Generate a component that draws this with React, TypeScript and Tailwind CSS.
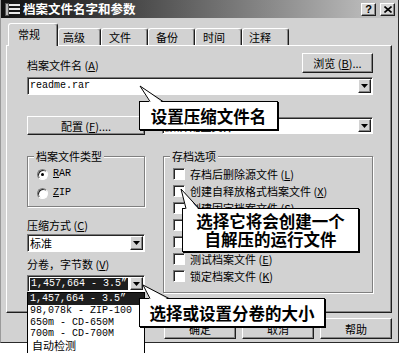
import React from 'react'

const raised =
  'border border-t-white border-l-white border-r-[#1e1e1e] border-b-[#1e1e1e] shadow-[inset_-1px_-1px_0_#868686]'
const sunken =
  'border border-t-[#7a7a7a] border-l-[#7a7a7a] border-r-white border-b-white shadow-[inset_1px_1px_0_#262626]'
const mono = "font-['Liberation_Mono','Noto_Sans_CJK_SC',monospace]"

function Arrow() {
  return (
    <svg width="7" height="4" viewBox="0 0 7 4">
      <path d="M0 0H7L3.5 4Z" fill="#000" />
    </svg>
  )
}

function Button({ className = '', children }: { className?: string; children: React.ReactNode }) {
  return (
    <div className={`flex items-center justify-center bg-[#d2d2d2] text-[11px] leading-[12px] ${raised} ${className}`}>
      {children}
    </div>
  )
}

function Combo({ className = '', children }: { className?: string; children?: React.ReactNode }) {
  return (
    <div className={`flex bg-white ${sunken} ${className}`}>
      <div className="flex-1 min-w-0 flex items-center pl-[2px] overflow-hidden whitespace-nowrap">{children}</div>
      <div className={`w-[13px] m-[1px] flex items-center justify-center bg-[#d2d2d2] ${raised}`}>
        <Arrow />
      </div>
    </div>
  )
}

function Radio({ on, label }: { on?: boolean; label: string }) {
  return (
    <div className="flex items-center gap-[5px] h-[12px]">
      <span className={`w-[11px] h-[11px] rounded-full bg-white flex items-center justify-center ${sunken}`}>
        {on && <span className="w-[3px] h-[3px] rounded-full bg-black" />}
      </span>
      <span className={`${mono} text-[10px] leading-[12px]`}>
        <span className="underline">{label[0]}</span>
        {label.slice(1)}
      </span>
    </div>
  )
}

function Check({ label, k }: { label: string; k: string }) {
  return (
    <div className="flex items-center gap-[5px] h-[12px]">
      <span className={`w-[12px] h-[12px] shrink-0 bg-white ${sunken}`} />
      <span className="text-[11px] leading-[12px] whitespace-nowrap">
        {label} (<span className="underline">{k}</span>)
      </span>
    </div>
  )
}

function TitleBar() {
  return (
    <div className="flex items-center h-[18px] bg-linear-to-r from-[#111111] via-[#686868] to-[#cacaca]">
      <svg width="16" height="13" viewBox="0 0 16 13" className="ml-[4px]">
        <rect x="0" y="0" width="4" height="13" fill="#555" />
        <rect x="4" y="1" width="11" height="2" fill="#e8e8e8" />
        <rect x="4" y="5" width="11" height="2" fill="#e8e8e8" />
        <rect x="4" y="9" width="11" height="2" fill="#e8e8e8" />
        <rect x="1" y="1" width="2" height="11" fill="#bbb" />
      </svg>
      <span className="ml-[2px] text-white font-bold text-[12.5px] leading-[14px]">档案文件名字和参数</span>
      <div className="ml-auto mr-[3px] flex gap-[4px]">
        <div className={`w-[15px] h-[13px] bg-[#d8d8d8] flex items-center justify-center text-[11px] font-bold leading-none font-['Liberation_Sans',sans-serif] ${raised}`}>
          ?
        </div>
        <div className={`w-[15px] h-[13px] bg-[#d8d8d8] flex items-center justify-center ${raised}`}>
          <svg width="8" height="7" viewBox="0 0 8 7">
            <path d="M0.5 0.5L7.5 6.5M7.5 0.5L0.5 6.5" stroke="#000" strokeWidth="1.6" />
          </svg>
        </div>
      </div>
    </div>
  )
}

function Tabs() {
  const tab =
    'flex items-center text-[11px] leading-[12px] border-t border-l border-r border-t-white border-l-white border-r-[#1e1e1e] rounded-t-[3px] shadow-[inset_-1px_0_0_#868686]'
  return (
    <div className="flex items-end h-[22px] ml-[7px] mt-[5px]">
      <div className={`${tab} relative z-10 -mb-px h-[23px] w-[50px] pl-[9px] pb-[2px] bg-[#d2d2d2]`}>常规</div>
      <div className={`${tab} h-[17px] w-[43px] pl-[4px]`}>高级</div>
      <div className={`${tab} h-[17px] w-[47px] pl-[7px]`}>文件</div>
      <div className={`${tab} h-[17px] w-[47px] pl-[7px]`}>备份</div>
      <div className={`${tab} h-[17px] w-[47px] pl-[7px]`}>时间</div>
      <div className={`${tab} h-[17px] w-[47px] pl-[6px]`}>注释</div>
    </div>
  )
}

function Group({ title, className = '', children }: { title: string; className?: string; children: React.ReactNode }) {
  return (
    <fieldset className={`border border-[#808080] shadow-[inset_1px_1px_0_#ffffff,1px_1px_0_#ffffff] ${className}`}>
      <legend className="ml-[6px] px-[2px] bg-[#d2d2d2] text-[11px] leading-[11px]">{title}</legend>
      {children}
    </fieldset>
  )
}

function Panel() {
  return (
    <div className="ml-[5px] w-[386px] h-[268px] flex flex-col pl-[20px] pr-[18px] pt-[7px] border border-t-white border-l-white border-r-[#1e1e1e] border-b-[#1e1e1e] shadow-[inset_-1px_-1px_0_#868686]">
      <div className="flex items-end justify-between h-[20px]">
        <span className="text-[11px] leading-[12px] pb-[2px]">
          档案文件名 (<span className="underline">A</span>)
        </span>
        <Button className="w-[71px] h-[20px]">
          浏览 (<span className="underline">B</span>)...
        </Button>
      </div>
      <Combo className="mt-[4px] h-[18px]">
        <span className={`${mono} text-[10px] leading-[12px]`}>readme.rar</span>
      </Combo>

      <div className="flex items-start mt-[21px]">
        <Button className="w-[118px] h-[19px]">
          配置 (<span className="underline">F</span>)....
        </Button>
        <Combo className="ml-[17px] mt-[1px] flex-1 h-[17px]">
          <span className="text-[11px] leading-[12px] font-bold text-[#222]">默认 配置文件</span>
        </Combo>
      </div>

      <div className="flex items-start mt-[16px]">
        <div className="w-[118px] flex flex-col">
          <Group title="档案文件类型" className="h-[56px]">
            <div className="flex flex-col gap-[7px] pl-[9px] pt-[6px]">
              <Radio on label="RAR" />
              <Radio label="ZIP" />
            </div>
          </Group>
          <span className="mt-[12px] text-[11px] leading-[12px]">
            压缩方式 (<span className="underline">C</span>)
          </span>
          <Combo className="mt-[3px] h-[18px]">
            <span className="text-[11px] leading-[12px]">标准</span>
          </Combo>
          <span className="mt-[6px] text-[11px] leading-[12px]">
            分卷，字节数 (<span className="underline">V</span>)
          </span>
          <Combo className="mt-[5px] h-[17px]">
            <span className={`${mono} text-[10px] leading-[12px] bg-[#1e1e1e] text-white px-[1px]`}>
              1,457,664 - 3.5”
            </span>
          </Combo>
        </div>

        <Group title="存档选项" className="ml-[18px] w-[210px] h-[142px]">
          <div className="flex flex-col gap-[5px] pl-[9px] pt-[6px]">
            <Check label="存档后删除源文件" k="L" />
            <Check label="创建自释放格式档案文件" k="X" />
            <Check label="创建固定档案文件" k="S" />
            <Check label="添加真实性校验信息" k="U" />
            <Check label="添加恢复记录" k="R" />
            <Check label="测试档案文件" k="E" />
            <Check label="锁定档案文件" k="K" />
          </div>
        </Group>
      </div>
    </div>
  )
}

function DropList() {
  const items = ['98,078k - ZIP-100', '650m - CD-650M', '700m - CD-700M']
  return (
    <div className="absolute left-[27px] top-[292px] w-[118px] h-[62px] bg-white border border-black flex flex-col">
      <div className={`h-[12px] pl-[2px] bg-[#1e1e1e] text-white ${mono} text-[10px] leading-[12px] whitespace-nowrap`}>
        1,457,664 - 3.5”
      </div>
      {items.map((t) => (
        <div key={t} className={`h-[11.7px] pl-[2px] ${mono} text-[10px] leading-[11.7px] whitespace-nowrap`}>
          {t}
        </div>
      ))}
      <div className="h-[11px] pl-[4px] text-[11px] leading-[11px]">自动检测</div>
    </div>
  )
}

const bubble =
  'absolute bg-white border border-black shadow-[1px_1px_0_#000] flex flex-col items-center justify-center font-bold text-[16.5px] leading-[18px] whitespace-nowrap'

function Callouts() {
  return (
    <>
      <div className={`${bubble} left-[139px] top-[101px] w-[139px] h-[29px]`}>设置压缩文件名</div>
      <div className={`${bubble} left-[182px] top-[208px] w-[177px] h-[44px]`}>
        <span>选择它将会创建一个</span>
        <span>自解压的运行文件</span>
      </div>
      <div className={`${bubble} left-[139px] top-[298px] w-[186px] h-[29px]`}>选择或设置分卷的大小</div>
      <svg className="absolute left-0 top-0" width="400" height="353" viewBox="0 0 400 353">
        <polygon points="140,86 150,103 163,103" fill="#fff" />
        <polyline points="150,101.5 140,86 163,101.5" fill="none" stroke="#000" strokeWidth="1" />
        <polygon points="181,189 186,210 199,210" fill="#fff" />
        <polyline points="186,208.5 181,189 199,208.5" fill="none" stroke="#000" strokeWidth="1" />
        <polygon points="143,285 150,300 169,300" fill="#fff" />
        <polyline points="150,298.5 143,285 169,298.5" fill="none" stroke="#000" strokeWidth="1" />
      </svg>
    </>
  )
}

export default function App() {
  return (
    <div className="relative w-[400px] h-[353px] overflow-hidden bg-white text-black font-['Noto_Sans_CJK_SC','Liberation_Sans',sans-serif]">
      <div className="flex flex-col w-[399px] h-[343px] bg-[#d2d2d2] border-l border-r border-b border-l-[#9a9a9a] border-r-[#2a2a2a] border-b-[#2a2a2a]">
        <TitleBar />
        <Tabs />
        <Panel />
        <div className="flex justify-end gap-[6px] mt-[5px] pr-[6px]">
          <Button className="w-[72px] h-[21px]">确定</Button>
          <Button className="w-[72px] h-[21px]">取消</Button>
          <Button className="w-[72px] h-[21px]">帮助</Button>
        </div>
      </div>
      <DropList />
      <Callouts />
    </div>
  )
}
